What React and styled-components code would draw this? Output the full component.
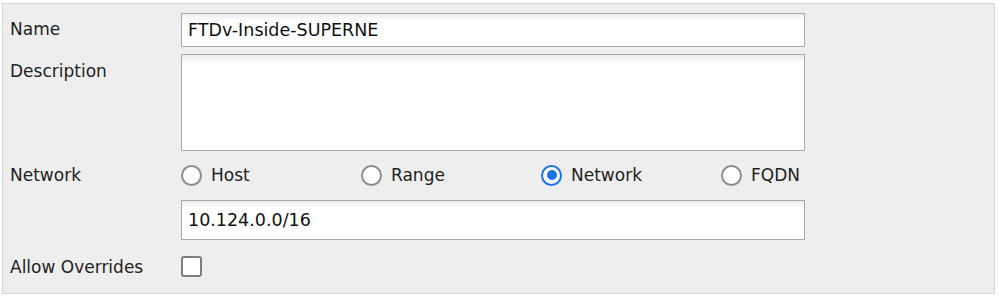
import React from 'react';
import styled, { createGlobalStyle } from 'styled-components';

const GlobalStyle = createGlobalStyle`
  html, body {
    margin: 0;
    padding: 0;
    background: #ffffff;
  }
  body {
    font-family: "DejaVu Sans", Verdana, sans-serif;
  }
`;

const Page = styled.div`
  width: 999px;
  height: 297px;
  padding: 3px 4px 0 2px;
  box-sizing: border-box;
`;

const Panel = styled.div`
  height: 291px;
  box-sizing: border-box;
  background: #eeeeee;
  border: 1px solid #d6d6d6;
  padding: 9px 0 0 7px;
  display: grid;
  grid-template-columns: 171px 624px;
  align-content: start;
  align-items: center;
  font-size: 17px;
  color: #222;
`;

const Label = styled.div`
  grid-column: 1;
  align-self: ${p => (p.$top ? 'start' : 'center')};
  margin-top: ${p => p.$mt || 0}px;
  line-height: 20px;
`;

const Field = styled.div`
  grid-column: 2;
  margin-top: ${p => p.$gap || 0}px;
`;

const TextInput = styled.div`
  height: ${p => p.$h}px;
  box-sizing: border-box;
  border: 1px solid #a9a9a9;
  background: linear-gradient(#ececec 0, #ffffff 7px);
  padding: 0 6px;
  display: flex;
  align-items: center;
  font-size: 17.5px;
  color: #111;
`;

const TextArea = styled.div`
  height: 97px;
  box-sizing: border-box;
  border: 1px solid #a9a9a9;
  background: linear-gradient(#ececec 0, #ffffff 8px);
`;

const RadioGroup = styled.div`
  display: flex;
  height: 28px;
  align-items: center;
`;

const RadioItem = styled.label`
  flex: 0 0 180px;
  display: flex;
  align-items: center;
  gap: 9px;
  &:last-child {
    flex-basis: auto;
  }
`;

const Circle = styled.span`
  width: 21px;
  height: 21px;
  box-sizing: border-box;
  border-radius: 50%;
  border: 2.5px solid ${p => (p.$on ? '#1a73e8' : '#8c8c8c')};
  background: #fff;
  display: flex;
  align-items: center;
  justify-content: center;
  &::after {
    content: '';
    width: 10px;
    height: 10px;
    border-radius: 50%;
    background: #1a73e8;
    display: ${p => (p.$on ? 'block' : 'none')};
  }
`;

const Check = styled.span`
  display: block;
  width: 21px;
  height: 21px;
  box-sizing: border-box;
  border: 2.5px solid #7d7d7d;
  border-radius: 3px;
  background: #fff;
`;

const options = ['Host', 'Range', 'Network', 'FQDN'];

export default function App() {
  return (
    <>
      <GlobalStyle />
      <Page>
        <Panel>
          <Label $mt={-2}>Name</Label>
          <Field>
            <TextInput $h={34}>FTDv-Inside-SUPERNE</TextInput>
          </Field>

          <Label $top $mt={14}>Description</Label>
          <Field $gap={7}>
            <TextArea />
          </Field>

          <Label $mt={10}>Network</Label>
          <Field $gap={10}>
            <RadioGroup>
              {options.map(o => (
                <RadioItem key={o}>
                  <Circle $on={o === 'Network'} />
                  {o}
                </RadioItem>
              ))}
            </RadioGroup>
          </Field>

          <Field $gap={11}>
            <TextInput $h={40}>10.124.0.0/16</TextInput>
          </Field>

          <Label $mt={16}>Allow Overrides</Label>
          <Field $gap={16}>
            <Check />
          </Field>
        </Panel>
      </Page>
    </>
  );
}
